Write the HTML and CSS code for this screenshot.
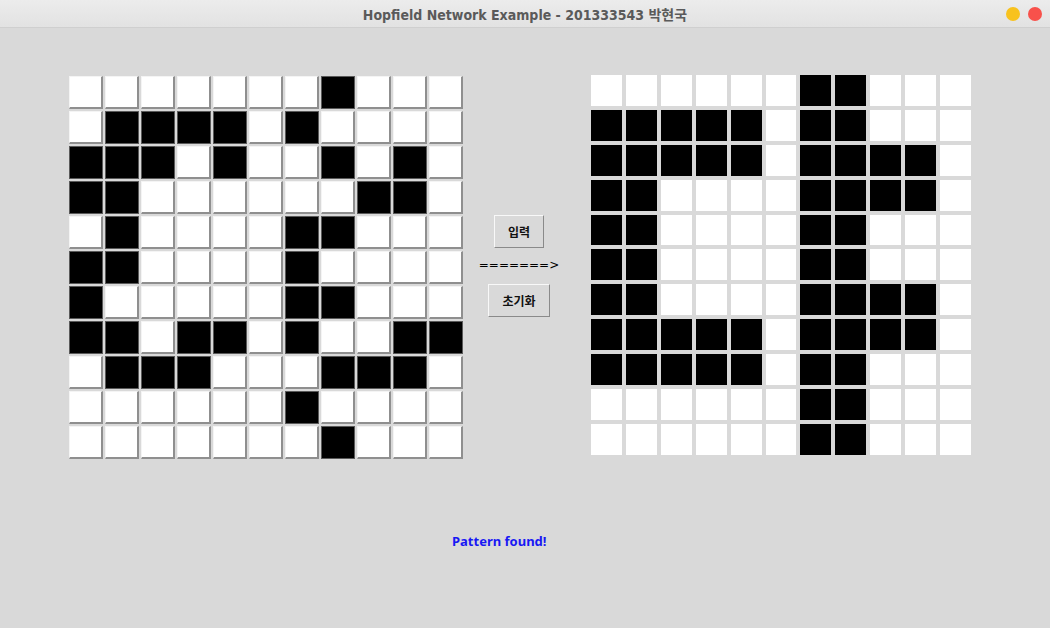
FILE: index.html
```html
<!DOCTYPE html>
<html lang="ko">
<head>
<meta charset="utf-8">
<title>Hopfield Network Example</title>
<link rel="stylesheet" href="styles.css">
</head>
<body>
<div class="window">
  <div class="titlebar">
    <span class="title">Hopfield Network Example - 201333543 박현국</span>
    <div class="lights"><span class="light yellow"></span><span class="light red"></span></div>
  </div>
  <div class="main">
    <div class="row">
      <div class="grid-in" id="gin"></div>
      <div class="middle">
        <button class="btn btn-in">입력</button>
        <div class="arrow">=======&gt;</div>
        <button class="btn btn-reset">초기화</button>
      </div>
      <div class="grid-out" id="gout"></div>
    </div>
    <div class="status">Pattern found!</div>
  </div>
</div>
<script src="script.js"></script>
</body>
</html>
```

FILE: styles.css
```css
* { box-sizing: border-box; }
html, body { margin: 0; padding: 0; }
body { background: #d9d9d9; width: 1050px; height: 628px; overflow: hidden; }
.window { width: 1050px; height: 628px; background: #d9d9d9; display: flex; flex-direction: column; }
.titlebar {
  height: 28px; flex: none;
  background: linear-gradient(#ececec, #e2e2e2);
  border-bottom: 1px solid #cfcfcf;
  display: flex; align-items: center; justify-content: center;
  position: relative;
}
.title {
  font-family: "DejaVu Sans Condensed", "DejaVu Sans", "Noto Sans CJK KR", sans-serif;
  font-stretch: condensed;
  font-weight: bold; font-size: 14px; color: #5a5a5a;
  margin-top: 1px;
}
.lights { position: absolute; right: 8px; top: 7px; display: flex; gap: 8px; }
.light { width: 14px; height: 14px; border-radius: 50%; display: block; }
.yellow { background: #f8c21e; }
.red { background: #f8514b; }
.main { padding: 48px 0 0 69px; }
.row { display: flex; align-items: flex-start; }
.grid-in {
  display: grid; grid-template-columns: repeat(11, 34px); grid-auto-rows: 33px;
  gap: 2px; width: 394px;
}
.cell-in {
  background: #fff;
  border-top: 1px solid #f4f4f4; border-left: 1px solid #f4f4f4;
  border-right: 2px solid #8f8f8f; border-bottom: 2px solid #8f8f8f;
}
.cell-in.on { background: #000; border: 1px solid #5a5a5a; }
.middle {
  width: 128px; padding-right: 16px; margin-top: 139px;
  display: flex; flex-direction: column; align-items: center;
}
.btn {
  font-family: "Noto Sans CJK KR", sans-serif; font-weight: bold; font-size: 12px;
  color: #111; background: #d9d9d9; height: 33px; padding: 0;
  border-top: 1px solid #f8f8f8; border-left: 1px solid #f8f8f8;
  border-right: 1px solid #8a8a8a; border-bottom: 1px solid #8a8a8a;
}
.btn-in { width: 50px; }
.btn-reset { width: 62px; }
.arrow {
  font-family: "DejaVu Sans", sans-serif; font-size: 12px; color: #000;
  height: 37px; line-height: 37px; margin-top: -1px;
}
.grid-out {
  display: grid; grid-template-columns: repeat(11, 1fr); grid-auto-rows: 30.9px;
  gap: 4px; width: 380px; margin-top: -1px;
}
.cell-out { background: #fff; }
.cell-out.on { background: #000; }
.status {
  padding-left: 383px; margin-top: 73px;
  font-family: "Noto Sans", sans-serif; font-weight: bold; font-size: 13px;
  color: #1818f4;
}
```

FILE: script.js
```js
var inPat = [
"00000001000",
"01111010000",
"11101001010",
"11000000110",
"01000011000",
"11000010000",
"10000011000",
"11011010011",
"01110001110",
"00000010000",
"00000001000"];
var outPat = [
"00000011000",
"11111011000",
"11111011110",
"11000011110",
"11000011000",
"11000011000",
"11000011110",
"11111011110",
"11111011000",
"00000011000",
"00000011000"];
function fill(id, pat, cls) {
  var g = document.getElementById(id);
  pat.forEach(function (row) {
    row.split("").forEach(function (c) {
      var d = document.createElement("div");
      d.className = cls + (c === "1" ? " on" : "");
      g.appendChild(d);
    });
  });
}
fill("gin", inPat, "cell-in");
fill("gout", outPat, "cell-out");
```
